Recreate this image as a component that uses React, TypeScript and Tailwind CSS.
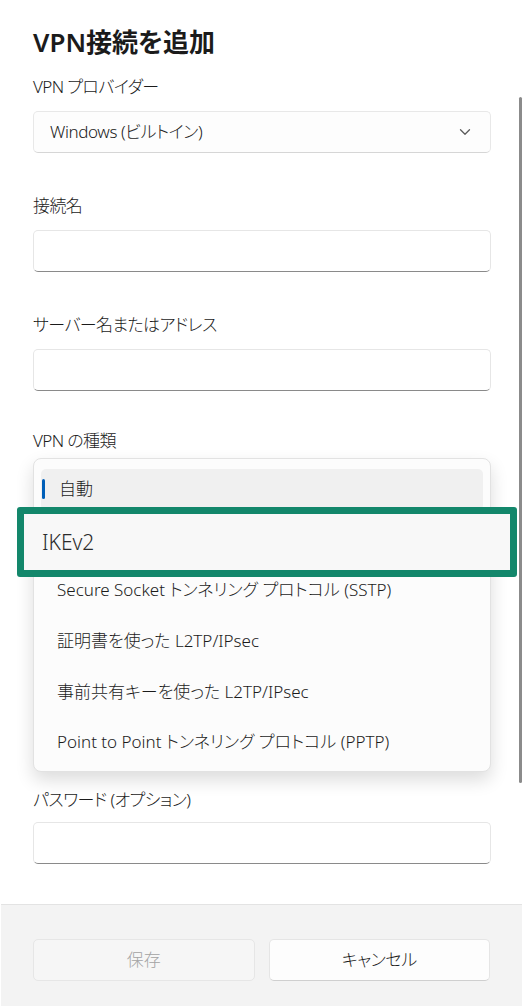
import React from "react";

const FONT = "[font-family:'Noto_Sans','Noto_Sans_CJK_JP',sans-serif] [font-feature-settings:'palt']";

function Label({ children, mt }: { children: React.ReactNode; mt: string }) {
  return (
    <div className={`${mt} text-[17px] font-light leading-[24px] tracking-[-0.6px] text-[#1b1b1b]`}>{children}</div>
  );
}

function TextInput({ mt }: { mt: string }) {
  return (
    <div
      className={`${mt} h-[42px] rounded-[5px] border border-[#e6e6e6] border-b-[#8a8a8a] bg-white`}
    />
  );
}

function Combo({ mt, value }: { mt: string; value: string }) {
  return (
    <div
      className={`${mt} flex h-[42px] items-center justify-between rounded-[5px] border border-[#e8e8e8] border-b-[#d6d6d6] bg-[#fdfdfd] pl-[16px] pr-[19px]`}
    >
      <span className="text-[17px] font-light leading-[24px] tracking-[-0.4px] text-[#1b1b1b]">{value}</span>
      <svg width="12" height="8" viewBox="0 0 12 8" fill="none">
        <path d="M1.5 1.8 L6 6.2 L10.5 1.8" stroke="#5c5c5c" strokeWidth="1.3" strokeLinecap="round" strokeLinejoin="round" />
      </svg>
    </div>
  );
}

const items = [
  "自動",
  "",
  "Secure Socket トンネリング プロトコル (SSTP)",
  "証明書を使った L2TP/IPsec",
  "事前共有キーを使った L2TP/IPsec",
  "Point to Point トンネリング プロトコル (PPTP)",
];

export default function App() {
  return (
    <div className={`relative flex h-[1006px] w-[527px] flex-col overflow-hidden bg-white ${FONT}`}>
      <div className="flex-1 pl-[33px] pr-[36px]">
        <div className="pt-[26px] text-[26px] font-semibold leading-[32px] text-[#1b1b1b]">
          VPN接続を追加
        </div>

        <Label mt="mt-[17px]">VPN プロバイダー</Label>
        <Combo mt="mt-[12px]" value="Windows (ビルトイン)" />

        <Label mt="mt-[41px]">接続名</Label>
        <TextInput mt="mt-[12px]" />

        <Label mt="mt-[41px]">サーバー名またはアドレス</Label>
        <TextInput mt="mt-[12px]" />

        <Label mt="mt-[38px]">VPN の種類</Label>
        {/* fields hidden behind the open dropdown */}
        <div className="h-[335px]" />

        <Label mt="mt-0">パスワード (オプション)</Label>
        <TextInput mt="mt-[10px]" />
      </div>

      {/* footer */}
      <div className="ml-[1px] mr-[5px] flex h-[102px] gap-[14px] border-t border-[#e3e3e3] bg-[#f3f3f3] px-[32px] pt-[34px]">
        <div className="flex h-[42px] flex-1 items-center justify-center rounded-[5px] border border-[#e6e6e6] bg-[#f6f6f6] text-[17px] font-light text-[#a3a3a3]">
          保存
        </div>
        <div className="flex h-[42px] flex-1 items-center justify-center rounded-[5px] border border-[#e5e5e5] border-b-[#cfcfcf] bg-[#fdfdfd] text-[17px] font-light tracking-[-0.4px] text-[#1b1b1b]">
          キャンセル
        </div>
      </div>

      {/* scrollbar */}
      <div className="absolute left-[519px] top-[97px] h-[686px] w-[3px] rounded-full bg-[#8b8b8b]" />

      {/* dropdown popup */}
      <div className="absolute left-[33px] top-[458px] h-[314px] w-[458px] rounded-[8px] border border-[#e2e2e2] bg-[#fcfcfc] pt-[5px] shadow-[0_8px_18px_rgba(0,0,0,0.14)]">
        {items.map((t, i) => (
          <div key={i} className="h-[50.6px] px-[7px] py-[5px]">
            {i === 0 ? (
              <div className="flex h-full items-center rounded-[5px] bg-[#f0f0f0]">
                <div className="ml-[1px] h-[20px] w-[3px] rounded-full bg-[#005fb8]" />
                <span className="ml-[14px] text-[17px] font-light leading-[24px] text-[#1b1b1b]">{t}</span>
              </div>
            ) : (
              <div className="flex h-full items-center rounded-[5px] pl-[16px]">
                <span className="whitespace-nowrap text-[17px] font-light leading-[24px] text-[#1b1b1b]">{t}</span>
              </div>
            )}
          </div>
        ))}
      </div>

      {/* highlight annotation */}
      <div className="absolute left-[17px] top-[507px] flex h-[70px] w-[500px] items-center rounded-[3px] border-[7px] border-[#13876b] bg-[#f8f8f8] pl-[18px]">
        <span className="text-[21px] font-light leading-[28px] text-[#2b2b2b]">IKEv2</span>
      </div>
    </div>
  );
}
